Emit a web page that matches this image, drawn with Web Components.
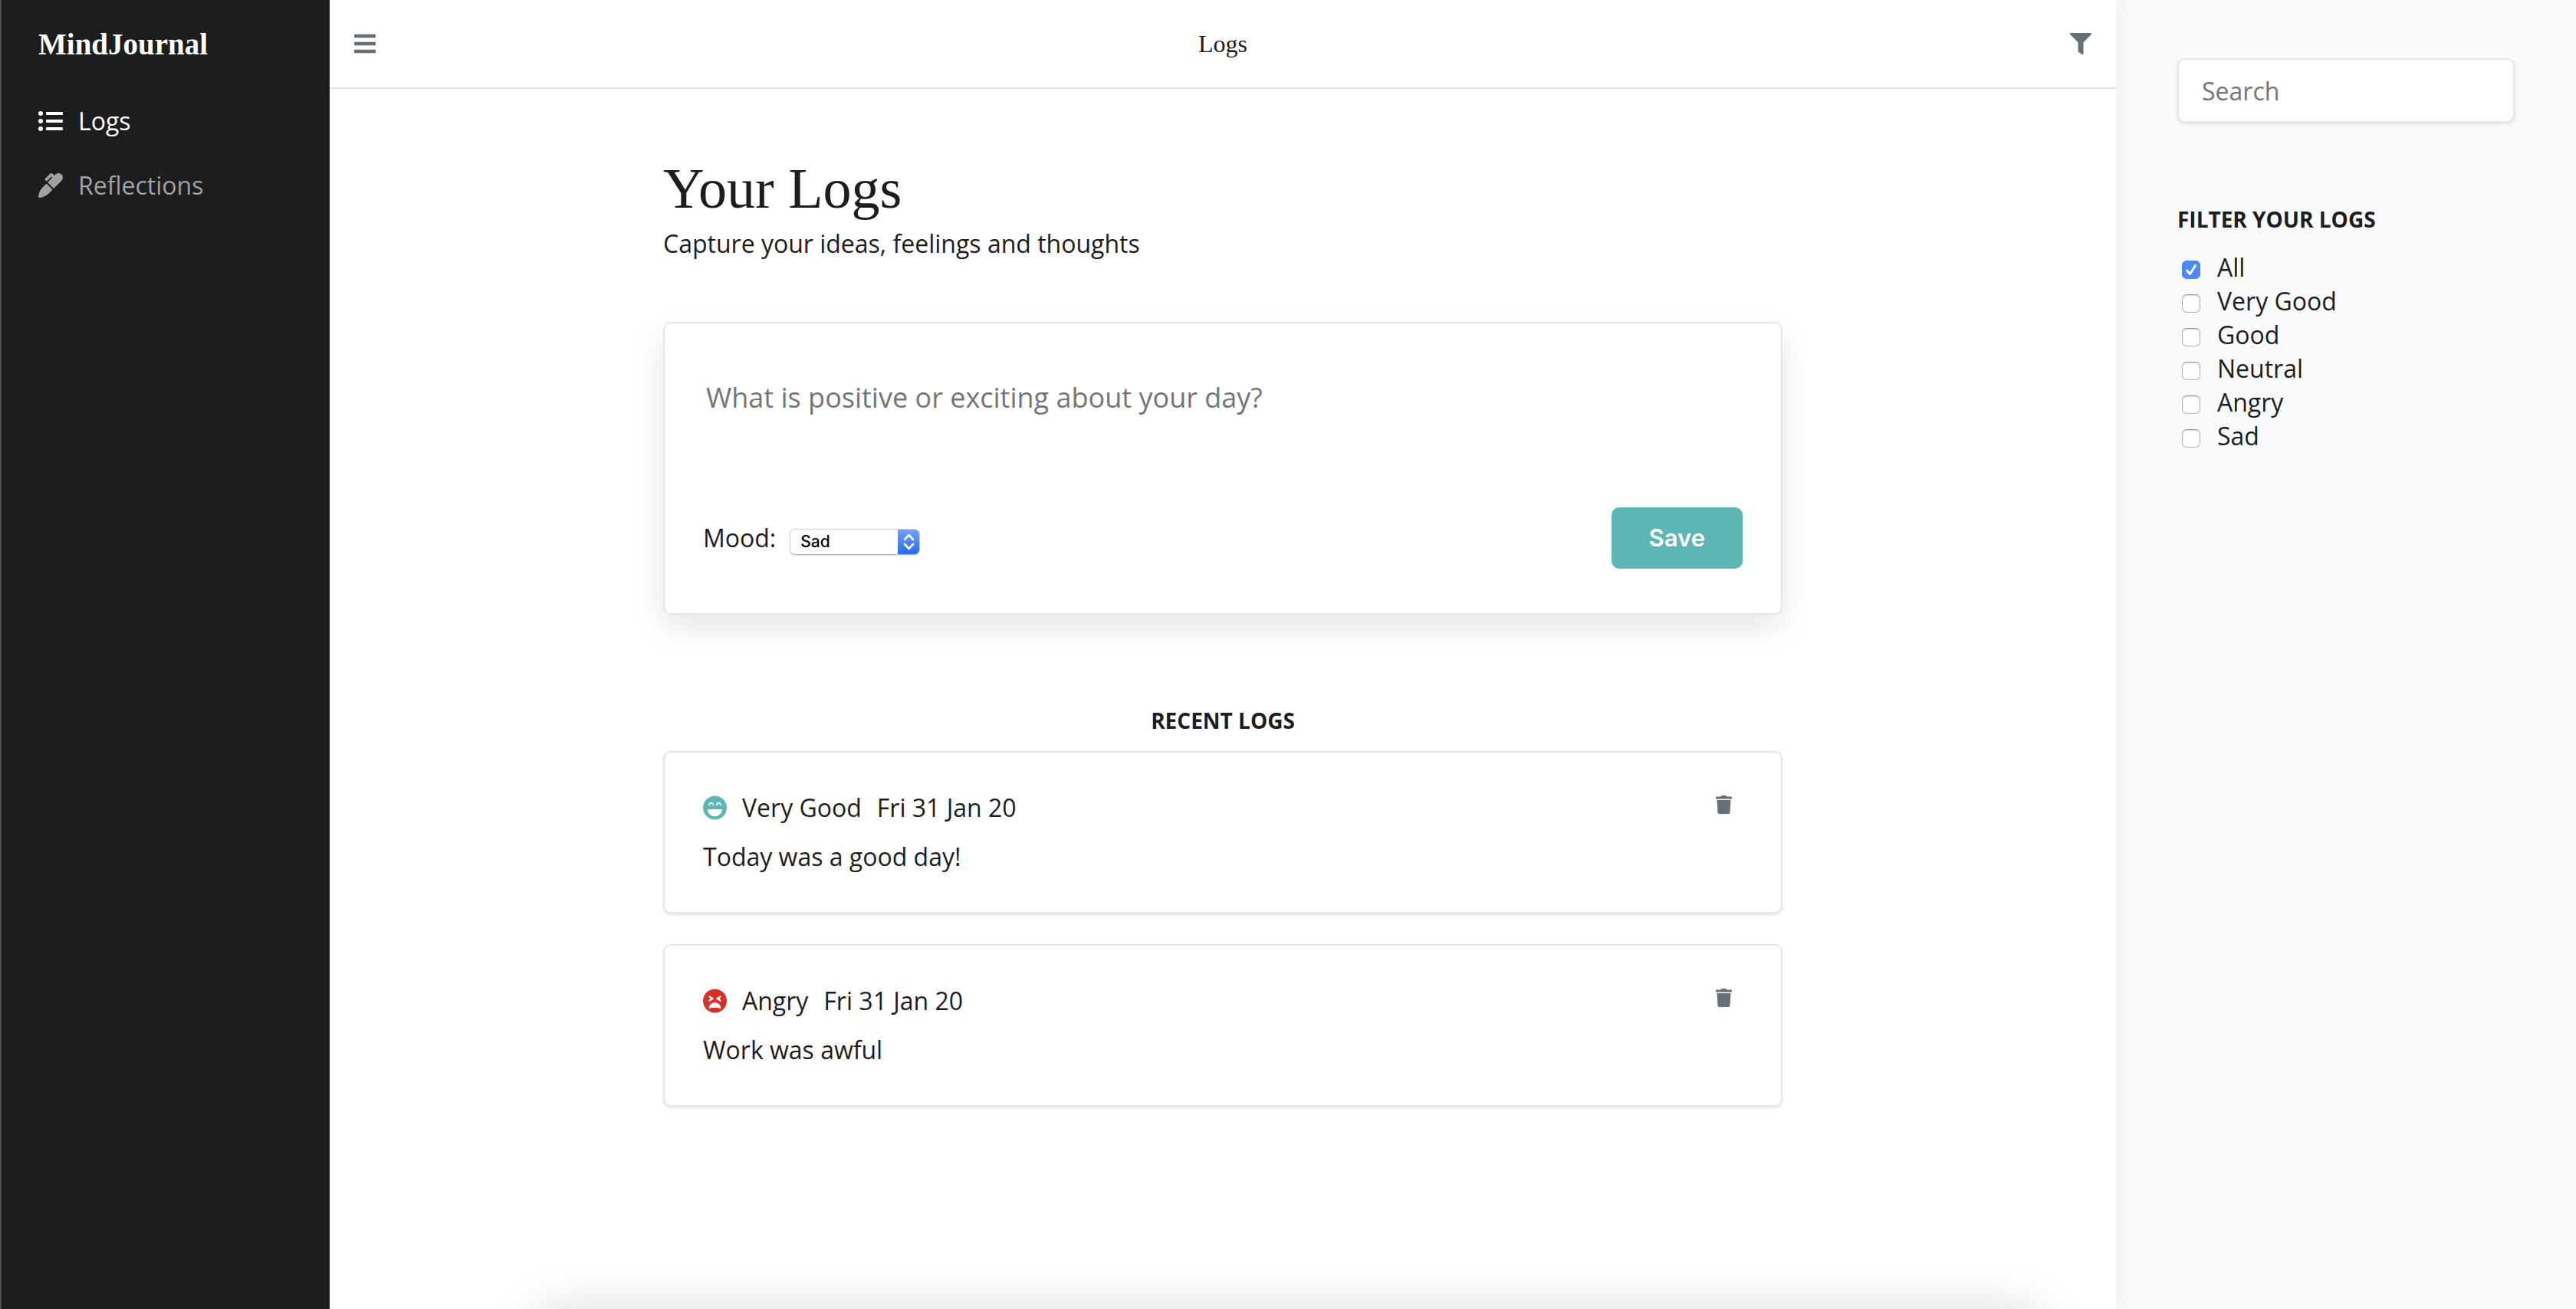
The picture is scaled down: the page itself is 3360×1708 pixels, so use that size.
<!DOCTYPE html>
<html lang="en">
<head>
<meta charset="utf-8">
<title>MindJournal</title>
<style>
  :root {
    --ink: #1c1d1e;
    --line: #e1e7eb;
    --muted: #657177;
    --teal: #5cb6b6;
    --panel: #f9fafc;
    --sans: "Open Sans", Lato, sans-serif;
    --serif: "Liberation Serif", serif;
    --ui: Inter, Roboto, sans-serif;
  }
  body { margin: 0; background: #fff; color: var(--ink); font: 32px/44px var(--sans); }
</style>
</head>
<body>
<journal-app></journal-app>
<script>
const ICONS = {
  list: ['0 0 512 512', 'M48 48a48 48 0 1 0 48 48 48 48 0 0 0-48-48zm0 160a48 48 0 1 0 48 48 48 48 0 0 0-48-48zm0 160a48 48 0 1 0 48 48 48 48 0 0 0-48-48zm448 16H176a16 16 0 0 0-16 16v32a16 16 0 0 0 16 16h320a16 16 0 0 0 16-16v-32a16 16 0 0 0-16-16zm0-320H176a16 16 0 0 0-16 16v32a16 16 0 0 0 16 16h320a16 16 0 0 0 16-16V80a16 16 0 0 0-16-16zm0 160H176a16 16 0 0 0-16 16v32a16 16 0 0 0 16 16h320a16 16 0 0 0 16-16v-32a16 16 0 0 0-16-16z'],
  marker: ['0 0 512 512', 'M93.95 290.03A327.038 327.038 0 0 0 .17 485.11l-.03.23c-1.7 15.28 11.21 28.2 26.49 26.51a327.02 327.02 0 0 0 195.34-93.8l75.4-75.4-128.02-128.02-75.4 75.4zM485.49 26.51c-35.35-35.35-92.67-35.35-128.02 0l-21.76 21.76-36.56-36.55c-15.62-15.62-40.95-15.62-56.56 0L138.47 115.84c-6.25 6.25-6.25 16.38 0 22.63l22.62 22.62c6.25 6.25 16.38 6.25 22.63 0l87.15-87.15 19.02 19.01L192 192l128 128 165.49-165.47c35.35-35.35 35.35-92.66 0-128.02z'],
  bars: ['0 0 448 512', 'M16 132h416c8.837 0 16-7.163 16-16V76c0-8.837-7.163-16-16-16H16C7.163 60 0 67.163 0 76v40c0 8.837 7.163 16 16 16zm0 160h416c8.837 0 16-7.163 16-16v-40c0-8.837-7.163-16-16-16H16c-8.837 0-16 7.163-16 16v40c0 8.837 7.163 16 16 16zm0 160h416c8.837 0 16-7.163 16-16v-40c0-8.837-7.163-16-16-16H16c-8.837 0-16 7.163-16 16v40c0 8.837 7.163 16 16 16z'],
  filter: ['0 0 512 512', 'M487.976 0H24.028C2.71 0-8.047 25.866 7.058 40.971L192 225.941V432c0 7.831 3.821 15.17 10.237 19.662l80 55.98C298.02 518.69 320 507.493 320 487.98V225.941l184.947-184.97C520.021 25.896 509.338 0 487.976 0z'],
  trash: ['0 0 448 512', 'M432 32H312l-9.4-18.7A24 24 0 0 0 281.1 0H166.8a23.72 23.72 0 0 0-21.4 13.3L136 32H16A16 16 0 0 0 0 48v32a16 16 0 0 0 16 16h416a16 16 0 0 0 16-16V48a16 16 0 0 0-16-16zM53.2 467a48 48 0 0 0 47.9 45h245.8a48 48 0 0 0 47.9-45L416 128H32z'],
  laugh: ['0 0 496 512', 'M248 8C111 8 0 119 0 256s111 248 248 248 248-111 248-248S385 8 248 8zm24 199.4c3.3-42.1 32.2-71.4 56-71.4s52.7 29.3 56 71.4c.7 8.6-10.8 11.9-14.9 4.5l-9.5-17c-7.7-13.7-19.2-21.6-31.5-21.6s-23.8 7.9-31.5 21.6l-9.5 17c-4.2 7.4-15.8 4.1-15.1-4.5zm-160 0c3.3-42.1 32.2-71.4 56-71.4s52.7 29.3 56 71.4c.7 8.6-10.8 11.9-14.9 4.5l-9.5-17c-7.7-13.7-19.2-21.6-31.5-21.6s-23.8 7.9-31.5 21.6l-9.5 17c-4.3 7.4-15.8 4-15.1-4.5zM398.9 306C390 377 329.4 432 256 432h-16c-73.4 0-134-55-142.9-126-1.2-9.5 6.3-18 15.9-18h270c9.6 0 17.1 8.4 15.9 18z'],
  tired: ['0 0 496 512', 'M248 8C111 8 0 119 0 256s111 248 248 248 248-111 248-248S385 8 248 8zm33.8 189.7l80-48c11.6-6.9 24 7.7 15.4 18L343.6 208l33.6 40.3c8.7 10.4-3.9 24.8-15.4 18l-80-48c-7.7-4.7-7.7-15.9 0-20.6zm-163-30c-8.6-10.3 3.8-24.9 15.4-18l80 48c7.8 4.7 7.8 15.9 0 20.6l-80 48c-11.5 6.8-24-7.6-15.4-18l33.6-40.3-33.6-40.3zM248 288c51.9 0 115.3 43.8 123.2 106.7 1.7 13.6-8 24.6-17.7 20.4-25.9-11.1-64.4-17.4-105.5-17.4s-79.6 6.3-105.5 17.4c-9.8 4.2-19.4-7-17.7-20.4C132.7 331.8 196.1 288 248 288z']
};

function define(name, render) {
  customElements.define(name, class extends HTMLElement {
    connectedCallback() {
      if (this.shadowRoot) return;
      const tpl = document.createElement('template');
      tpl.innerHTML = '<style>*{box-sizing:border-box}</style>' + render(this);
      this.attachShadow({ mode: 'open' }).append(tpl.content.cloneNode(true));
    }
  });
}

/* An icon is as tall as --size (32px) and takes the text colour. */
define('app-icon', el => {
  const [box, path] = ICONS[el.getAttribute('name')];
  return `
  <style>
    :host { display: block; flex: none; }
    svg { display: block; height: var(--size, 32px); fill: currentColor; }
  </style>
  <svg viewBox="${box}" aria-hidden="true"><path d="${path}"/></svg>`;
});

define('nav-link', el => `
  <style>
    :host { display: block; }
    a { display: flex; align-items: center; gap: 20px; color: #a0a1a3; text-decoration: none; }
    :host([active]) a { color: #fff; }
  </style>
  <a href="#${el.getAttribute('to')}"><app-icon name="${el.getAttribute('icon')}"></app-icon><slot></slot></a>`);

define('side-bar', () => `
  <style>
    :host { display: block; background: var(--ink); border-left: 2px solid #4a4b4d; padding: 36px 48px; }
    .brand { color: #fff; font: bold 39px/44px var(--serif); }
    nav { display: flex; flex-direction: column; gap: 40px; margin-top: 56px; }
  </style>
  <div class="brand">MindJournal</div>
  <nav><slot></slot></nav>`);

define('top-bar', () => `
  <style>
    :host { display: flex; align-items: center; justify-content: space-between; height: 116px;
      box-sizing: border-box; padding: 0 32px; border-bottom: 2px solid var(--line); }
    button { border: 0; padding: 0; background: none; color: var(--muted); }
    .filter { --size: 28px; }
    .title { font: 32px/44px var(--serif); }
  </style>
  <button aria-label="Menu"><app-icon name="bars"></app-icon></button>
  <div class="title"><slot></slot></div>
  <button class="filter" aria-label="Filter"><app-icon name="filter"></app-icon></button>`);

define('log-form', () => `
  <style>
    :host { display: block; box-sizing: border-box; border: 2px solid var(--line); border-radius: 10px;
      padding: 50px 50px 58px; background: #fff; box-shadow: 0 16px 40px rgba(0,0,0,.1); }
    form { margin: 0; display: flex; flex-direction: column; gap: 40px; }
    textarea { display: block; width: 100%; height: 150px; padding: 25px 4px; border: 0; resize: none;
      background: none; outline: 0; font: 36px/44px var(--sans); color: inherit; }
    textarea::placeholder { color: #757575; opacity: 1; }
    .row { display: flex; align-items: center; justify-content: space-between; }
    .mood { display: flex; align-items: baseline; gap: 18px; }
    select { appearance: none; width: 170px; height: 34px; padding: 0 40px 0 13px; margin: 0;
      border: 1px solid #d0d0d0; border-bottom-color: #b4b4b4; border-radius: 7px;
      font: 500 21px/30px var(--ui); color: #000; box-shadow: 0 1px 1px rgba(0,0,0,.12);
      background:
        url("data:image/svg+xml,%3Csvg xmlns='http://www.w3.org/2000/svg' viewBox='0 0 29 34'%3E%3Cpath d='M9 14l5.500-6 5.500 6M9 20l5.500 6 5.500-6' fill='none' stroke='white' stroke-width='2.600' stroke-linecap='round' stroke-linejoin='round'/%3E%3C/svg%3E") right / 29px 34px no-repeat border-box,
        linear-gradient(#74a4f8, #2469f5) right / 29px 34px no-repeat border-box,
        #fff; }
    button { border: 0; border-radius: 10px; height: 80px; padding: 0 49px; background: var(--teal);
      color: #fff; font: 600 31px/44px var(--ui); }
  </style>
  <form onsubmit="return false">
    <textarea aria-label="Log" placeholder="What is positive or exciting about your day?"></textarea>
    <div class="row">
      <div class="mood">
        <label for="mood">Mood:</label>
        <select id="mood">
          <option>Very Good</option><option>Good</option><option>Neutral</option><option>Angry</option><option selected>Sad</option>
        </select>
      </div>
      <button type="submit">Save</button>
    </div>
  </form>`);

define('log-entry', el => `
  <style>
    :host { display: flex; flex-direction: column; gap: 20px; box-sizing: border-box; padding: 50px;
      border: 2px solid var(--line); border-radius: 10px; background: #fff; box-shadow: 0 2px 4px rgba(0,0,0,.1); }
    .head { display: flex; gap: 20px; }
    app-icon { align-self: center; }
    .face { color: ${el.getAttribute('color')}; }
    button { display: flex; justify-content: center; align-items: center; margin-left: auto;
      width: 50px; height: 36px; border: 0; padding: 0; background: none; color: var(--muted); --size: 24px; }
    p { margin: 0; }
  </style>
  <div class="head">
    <app-icon class="face" name="${el.getAttribute('face')}"></app-icon>
    <span>${el.getAttribute('mood')}</span>
    <time>${el.getAttribute('date')}</time>
    <button aria-label="Delete"><app-icon name="trash"></app-icon></button>
  </div>
  <p><slot></slot></p>`);

define('filter-option', el => `
  <style>
    :host { display: block; }
    label { display: flex; align-items: center; }
    input { appearance: none; flex: none; width: 24px; height: 24px; margin: 6px 22px 0 6px; border-radius: 6px;
      border: 1px solid #b4b4b4; border-top-color: #999; background: #fff; box-shadow: inset 0 1px 2px rgba(0,0,0,.18); }
    input:checked { border-color: #4a86f5; box-shadow: none; background: #4d88f6
      url("data:image/svg+xml,%3Csvg xmlns='http://www.w3.org/2000/svg' viewBox='0 0 24 24'%3E%3Cpath d='M6.500 13l4 4.500 7-11' fill='none' stroke='white' stroke-width='3' stroke-linecap='round' stroke-linejoin='round'/%3E%3C/svg%3E") center / 24px no-repeat border-box; }
  </style>
  <label><input type="checkbox" ${el.hasAttribute('checked') ? 'checked' : ''}><span><slot></slot></span></label>`);

define('filter-panel', () => `
  <style>
    :host { display: block; padding: 76px 80px; background: var(--panel); }
    input { display: block; width: 100%; height: 84px; padding: 0 30px; border: 2px solid var(--line);
      border-radius: 10px; background: #fff; font: 32px/44px var(--sans); color: inherit; outline: 0;
      box-shadow: 0 2px 4px rgba(0,0,0,.1); }
    input::placeholder { color: #757575; opacity: 1; }
    h2 { margin: 106px 0 21px; font: bold 28px/40px var(--sans); text-transform: uppercase; }
  </style>
  <input type="search" aria-label="Search" placeholder="Search">
  <h2>Filter your logs</h2>
  <slot></slot>`);

define('slide-sheet', () => `
  <style>
    :host { position: fixed; z-index: 3; top: 100%; left: 50%; width: 1960px; height: 200px;
      margin-left: -980px; background: #fff; box-shadow: 0 0 60px rgba(0,0,0,.14); }
  </style>`);

define('journal-app', () => `
  <style>
    :host { display: grid; grid-template-columns: 430px minmax(0, 1fr) 600px; min-height: 100vh; }
    side-bar { position: relative; z-index: 2; }
    main { position: relative; z-index: 1; background: #fff; box-shadow: 0 0 30px rgba(0,0,0,.06); }
    .content { max-width: 1460px; margin: 0 auto; padding: 88px 0; }
    h1 { margin: 0; font: 74px/84px var(--serif); }
    .lead { margin: 8px 0 80px; }
    h2 { margin: 118px 0 20px; font: bold 28px/40px var(--sans); text-align: center; text-transform: uppercase; }
    .list { display: flex; flex-direction: column; gap: 40px; }
  </style>
  <side-bar>
    <nav-link icon="list" to="logs" active>Logs</nav-link>
    <nav-link icon="marker" to="reflections">Reflections</nav-link>
  </side-bar>
  <main>
    <top-bar>Logs</top-bar>
    <div class="content">
      <h1>Your Logs</h1>
      <p class="lead">Capture your ideas, feelings and thoughts</p>
      <log-form></log-form>
      <h2>Recent logs</h2>
      <div class="list">
        <log-entry face="laugh" color="#5cb6b6" mood="Very Good" date="Fri 31 Jan 20">Today was a good day!</log-entry>
        <log-entry face="tired" color="#d63027" mood="Angry" date="Fri 31 Jan 20">Work was awful</log-entry>
      </div>
    </div>
  </main>
  <filter-panel>
    <filter-option checked>All</filter-option>
    <filter-option>Very Good</filter-option>
    <filter-option>Good</filter-option>
    <filter-option>Neutral</filter-option>
    <filter-option>Angry</filter-option>
    <filter-option>Sad</filter-option>
  </filter-panel>
  <slide-sheet></slide-sheet>`);
</script>
</body>
</html>
